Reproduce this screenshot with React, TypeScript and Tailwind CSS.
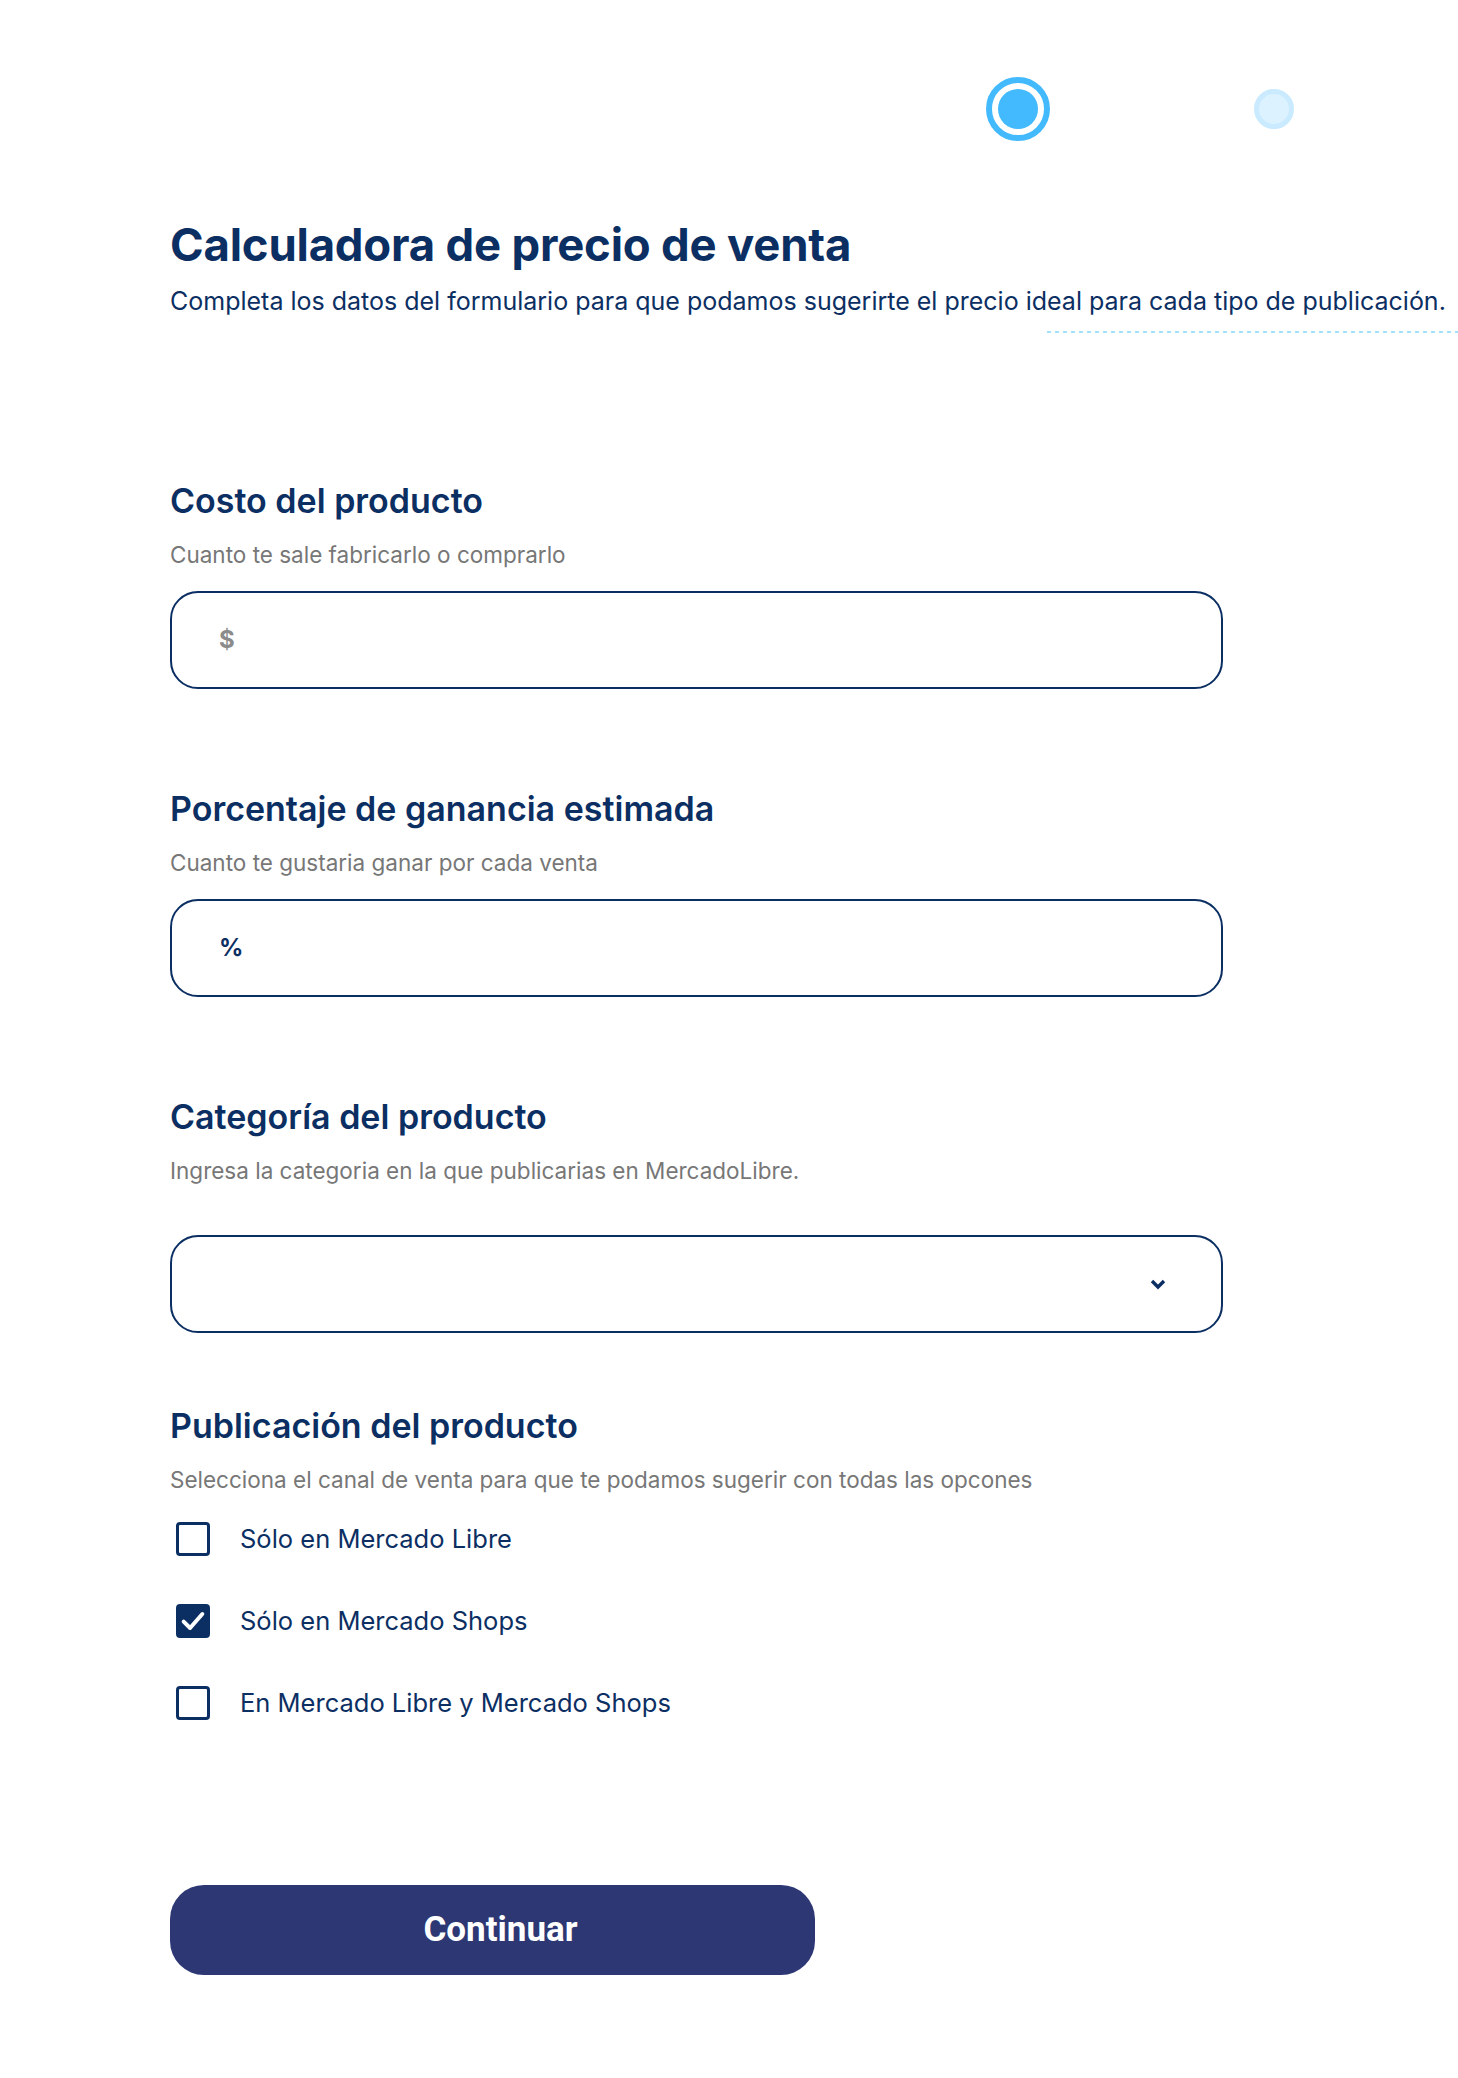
import { useState } from 'react';

const options = [
  'Sólo en Mercado Libre',
  'Sólo en Mercado Shops',
  'En Mercado Libre y Mercado Shops',
];

function Field({
  title,
  hint,
  children,
  gap = 'mt-[22px]',
}: {
  title: string;
  hint: string;
  children: React.ReactNode;
  gap?: string;
}) {
  return (
    <div>
      <h2 className="text-[34px] leading-[40px] font-semibold text-[#0c2f63]">{title}</h2>
      <p className="mt-[20px] text-[22.5px] leading-[28px] text-[#777777]">{hint}</p>
      <div className={gap}>{children}</div>
    </div>
  );
}

function Checkbox({ checked, label, onClick }: { checked: boolean; label: string; onClick: () => void }) {
  return (
    <button type="button" onClick={onClick} className="flex items-center gap-[30px] pl-[6px] text-left">
      <span
        className={
          checked
            ? 'w-[34px] h-[34px] rounded-[4px] border-[3px] border-[#0c2f63] bg-[#0c2f63] flex items-center justify-center'
            : 'w-[34px] h-[34px] rounded-[4px] border-[3px] border-[#0c2f63] bg-white'
        }
      >
        {checked && (
          <svg width="28" height="28" viewBox="0 0 24 24" fill="none">
            <polyline points="4,12.5 9.5,18 20,6" stroke="white" strokeWidth="3.4" strokeLinecap="round" strokeLinejoin="round" />
          </svg>
        )}
      </span>
      <span className="text-[25.5px] leading-[34px] text-[#0c2f63]">{label}</span>
    </button>
  );
}

export default function App() {
  const [selected, setSelected] = useState(1);

  return (
    <div className="min-h-[2078px] bg-white font-['Inter',sans-serif]">
      {/* Stepper */}
      <div className="flex items-center pt-[77px] pl-[986px]">
        <div className="w-[64px] h-[64px] rounded-full border-[6px] border-[#43b9fe] p-[6px]">
          <div className="w-full h-full rounded-full bg-[#43b9fe]" />
        </div>
        <div className="ml-[204px] w-[40px] h-[40px] rounded-full border-[5px] border-[#c9eaff] bg-[#ddf2ff]" />
      </div>

      {/* Header */}
      <div className="pl-[170px] mt-[76px]">
        <h1 className="text-[45.5px] leading-[55px] font-bold text-[#0c2f63] tracking-[-0.2px]">
          Calculadora de precio de venta
        </h1>
        <p className="mt-[14px] text-[25px] leading-[30px] text-[#0c2f63] whitespace-nowrap">
          Completa los datos del formulario para que podamos sugerirte el precio ideal para cada tipo de publicación.
        </p>
      </div>
      <div className="flex justify-end mt-[15px]">
        <div className="w-[411px] h-[2px] bg-[linear-gradient(to_right,#a8defe_50%,transparent_50%)] bg-[length:8px_2px]" />
      </div>

      {/* Form */}
      <div className="pl-[170px] mt-[148px] w-[1223px]">
        <Field title="Costo del producto" hint="Cuanto te sale fabricarlo o comprarlo">
          <div className="h-[98px] rounded-[28px] border-2 border-[#0c2f63] flex items-center pl-[47px]">
            <span className="text-[24px] font-bold text-[#8b8b8b]">$</span>
          </div>
        </Field>

        <div className="mt-[100px]">
          <Field title="Porcentaje de ganancia estimada" hint="Cuanto te gustaria ganar por cada venta">
            <div className="h-[98px] rounded-[28px] border-2 border-[#0c2f63] flex items-center pl-[47px]">
              <span className="text-[24px] font-bold text-[#0c2f63]">%</span>
            </div>
          </Field>
        </div>

        <div className="mt-[100px]">
          <Field
            title="Categoría del producto"
            hint="Ingresa la categoria en la que publicarias en MercadoLibre."
            gap="mt-[50px]"
          >
            <div className="h-[98px] rounded-[28px] border-2 border-[#0c2f63] flex items-center justify-end pr-[55px]">
              <svg width="16" height="12" viewBox="0 0 16 12" fill="none">
                <polyline points="2,3 8,9 14,3" stroke="#0c2f63" strokeWidth="3.4" strokeLinejoin="miter" />
              </svg>
            </div>
          </Field>
        </div>

        <div className="mt-[73px]">
          <Field
            title="Publicación del producto"
            hint="Selecciona el canal de venta para que te podamos sugerir con todas las opcones"
            gap="mt-[28px]"
          >
            <div className="flex flex-col gap-[48px]">
              {options.map((label, i) => (
                <Checkbox key={label} label={label} checked={selected === i} onClick={() => setSelected(i)} />
              ))}
            </div>
          </Field>
        </div>

        <button
          type="button"
          className="mt-[165px] w-[645px] h-[90px] rounded-[34px] bg-[#2c3774] pl-[16px] text-white text-[35px] font-bold font-['Roboto',sans-serif]"
        >
          Continuar
        </button>
      </div>
    </div>
  );
}
